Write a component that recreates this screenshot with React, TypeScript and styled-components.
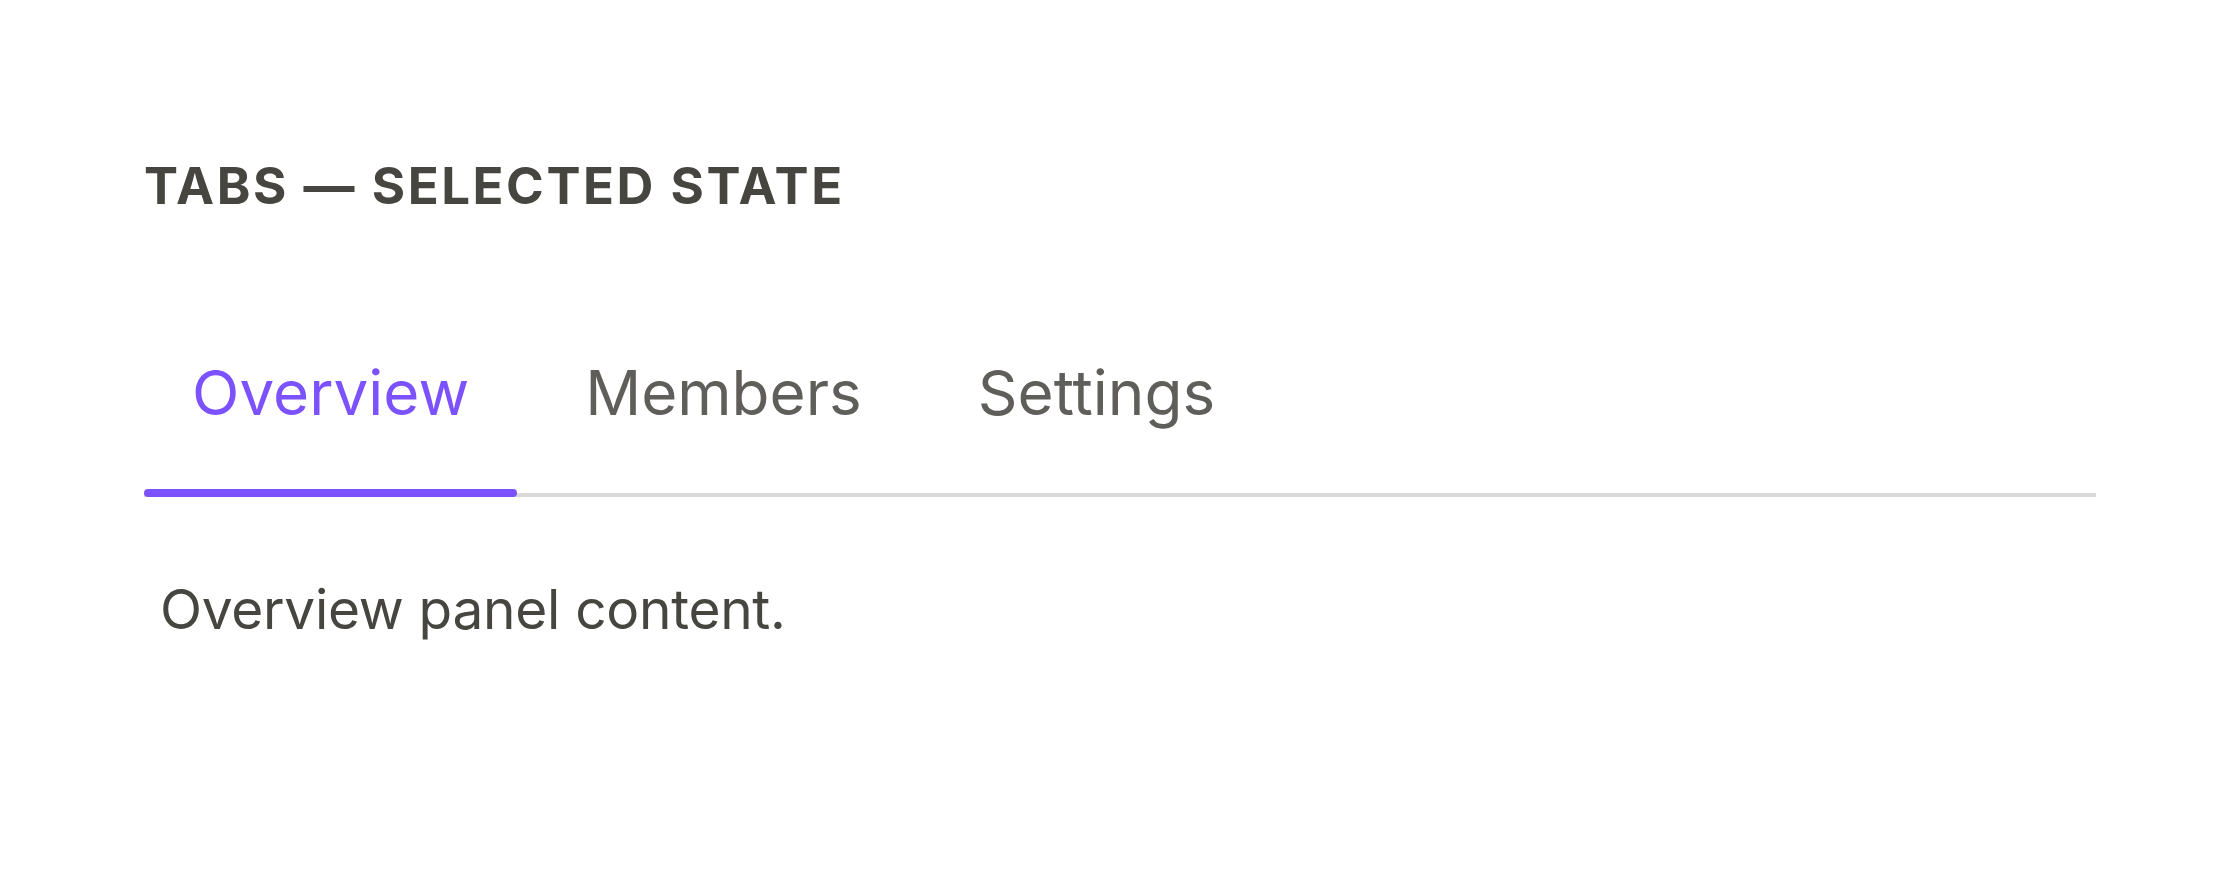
import { useState } from 'react'
import styled, { createGlobalStyle } from 'styled-components'

const GlobalStyle = createGlobalStyle`
  html, body {
    margin: 0;
    padding: 0;
    background: #ffffff;
  }

  body {
    font-family: Inter, "Noto Sans", "Liberation Sans", sans-serif;
    -webkit-font-smoothing: antialiased;
  }
`

const Page = styled.main`
  min-height: 876px;
  box-sizing: border-box;
  padding: 155px 144px 0;
`

const Heading = styled.h2`
  margin: 0 0 130px;
  font-size: 51px;
  line-height: 1.2;
  font-weight: 700;
  letter-spacing: 0.05em;
  text-transform: uppercase;
  color: #474540;
`

const TabList = styled.div`
  display: flex;
  gap: 20px;
  box-shadow: inset 0 -4px 0 #d9d9d9;
`

const Tab = styled.button<{ $active?: boolean }>`
  position: relative;
  border: none;
  background: transparent;
  margin: 0;
  padding: 0 48px 58px;
  font-family: inherit;
  font-size: 62px;
  line-height: 1.5;
  font-weight: 400;
  color: ${(p) => (p.$active ? '#7c52ff' : '#5f5e5a')};
  cursor: pointer;

  &::after {
    content: "";
    position: absolute;
    left: 0;
    right: 0;
    bottom: 0;
    height: 8px;
    border-radius: 4px;
    background: ${(p) => (p.$active ? '#7c52ff' : 'transparent')};
  }
`

const Panel = styled.div`
  padding: 71px 16px 0;
  font-size: 55px;
  line-height: 1.5;
  letter-spacing: -0.3px;
  color: #474540;
`

const tabs = ['Overview', 'Members', 'Settings']

export default function App() {
  const [selected, setSelected] = useState('Overview')

  return (
    <>
      <GlobalStyle />
      <Page>
        <Heading>Tabs — Selected State</Heading>
        <TabList role="tablist">
          {tabs.map((t) => (
            <Tab
              key={t}
              role="tab"
              aria-selected={selected === t}
              $active={selected === t}
              onClick={() => setSelected(t)}
            >
              {t}
            </Tab>
          ))}
        </TabList>
        <Panel role="tabpanel">{selected} panel content.</Panel>
      </Page>
    </>
  )
}
